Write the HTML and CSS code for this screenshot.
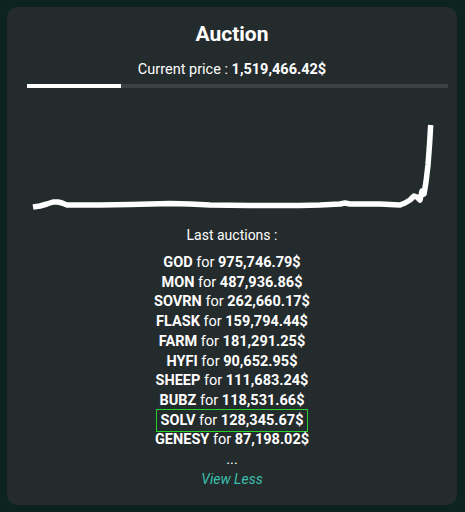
FILE: index.html
```html
<!DOCTYPE html>
<html lang="en">
<head>
    <meta charset="UTF-8">
    <title>Auction</title>
    <link rel="stylesheet" href="styles.css">
</head>
<body>
    <div class="card">
        <h1 class="title">Auction</h1>
        <p class="price">Current price : <b>1,519,466.42$</b></p>
        <div class="progress">
            <div class="progress-fill" style="width: 22.3%"></div>
        </div>

        <svg class="chart" viewBox="27 88 421 127" width="421" height="127">
            <polyline fill="none" stroke="#fff" stroke-width="5.5" stroke-linejoin="round"
                points="33,207 40,206 47,204 53,202 58,202 62,203 67,205 80,205 100,205 130,204.5 150,204 170,203.5 190,204 210,205 250,205.5 300,205.5 320,205 340,204 345,203 350,204 380,204 400,205 405,203 410,200 414,196 417,197 420,200 422,191 424,194 426,182 428,165 429.5,145 430.7,125"/>
        </svg>

        <p class="last-title">Last auctions :</p>
        <div class="auctions">
            <div class="row"><b>GOD</b> for <b>975,746.79$</b></div>
            <div class="row"><b>MON</b> for <b>487,936.86$</b></div>
            <div class="row"><b>SOVRN</b> for <b>262,660.17$</b></div>
            <div class="row"><b>FLASK</b> for <b>159,794.44$</b></div>
            <div class="row"><b>FARM</b> for <b>181,291.25$</b></div>
            <div class="row"><b>HYFI</b> for <b>90,652.95$</b></div>
            <div class="row"><b>SHEEP</b> for <b>111,683.24$</b></div>
            <div class="row"><b>BUBZ</b> for <b>118,531.66$</b></div>
            <div class="row"><span class="selected"><b>SOLV</b> for <b>128,345.67$</b></span></div>
            <div class="row"><b>GENESY</b> for <b>87,198.02$</b></div>
            <div class="row">...</div>
        </div>
        <a class="view-less" href="#">View Less</a>
    </div>
</body>
</html>
```
FILE: styles.css
```css
* { margin: 0; padding: 0; box-sizing: border-box; }
body {
    font-family: Roboto, "Liberation Sans", sans-serif;
    background: #0d231f;
    color: #fff;
}
.card {
    margin: 7px 8px 7px 7px;
    height: 498px;
    background: #242b2c;
    border-radius: 10px;
    padding-top: 15px;
    text-align: center;
}
.title {
    font-size: 21px;
    font-weight: 700;
    line-height: 25px;
}
.price {
    margin-top: 13px;
    font-size: 14.5px;
    line-height: 20px;
}
.progress {
    margin: 4px 9px 0 20px;
    height: 4px;
    background: #3b4243;
}
.progress-fill {
    height: 100%;
    background: #fff;
}
.chart {
    display: block;
    margin-left: 20px;
}
.last-title {
    margin-top: 10px;
    font-size: 14px;
    line-height: 20px;
}
.auctions {
    margin-top: 8px;
    font-size: 14.5px;
    line-height: 19.7px;
}
.auctions b { font-weight: 700; }
.selected {
    border: 1px solid #25d12a;
    padding: 2px 4px;
}
.view-less {
    display: block;
    margin-top: -1px;
    font-size: 14px;
    line-height: 20px;
    font-style: italic;
    color: #3bbfad;
    text-decoration: none;
}
```
